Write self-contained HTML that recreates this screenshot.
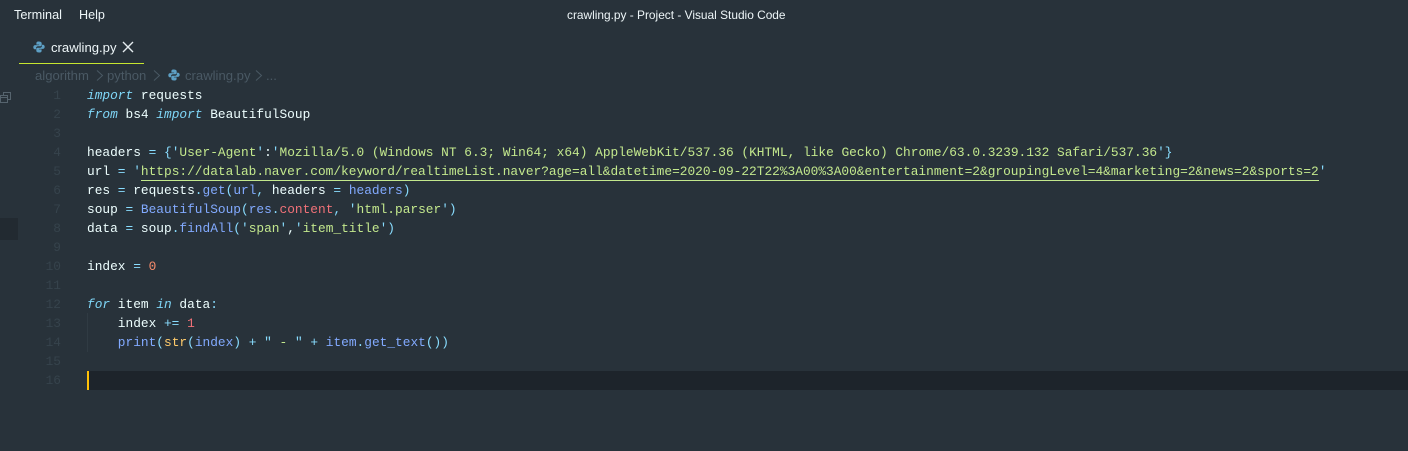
<!DOCTYPE html>
<html><head><meta charset="utf-8">
<style>
html,body{margin:0;padding:0;width:1408px;height:451px;overflow:hidden;background:#28323a}
.u{position:absolute;font-family:"Liberation Sans",sans-serif;font-size:12.6px;line-height:18px;white-space:nowrap;color:#eef6f8}
.bc{color:#4a5964}
.l{position:absolute;left:87px;height:19px;line-height:19px;font-family:"Liberation Mono",monospace;font-size:12.83px;white-space:pre;color:#eeffff}
.n{position:absolute;width:61px;left:0;text-align:right;height:19px;line-height:19px;font-family:"Liberation Mono",monospace;font-size:12.83px;color:#36434c}
i{color:#7fd6f7;font-style:italic}
.o{color:#89ddff}.f{color:#82aaff}.s{color:#c3e88d}.r{color:#f07178}.c{color:#f78c6c}.y{color:#ffcb6b}
</style></head><body>
<div class="u" style="left:14px;top:6px;font-size:12.7px">Terminal</div>
<div class="u" style="left:79px;top:6px">Help</div>
<div class="u" style="left:567px;top:6px;font-size:11.9px">crawling.py - Project - Visual Studio Code</div>

<svg style="position:absolute;left:33px;top:41px" width="12" height="12" viewBox="0 0 12 12"><path d="M5.8 0.5C3.5 0.5 3.4 1.6 3.4 2.4V3.6H6.1V4.1H2.2C1 4.1 0.3 5 0.3 6.2C0.3 7.5 1 8.3 2 8.3H3.1V7C3.1 5.9 4 5.2 5 5.2H7.4C8.2 5.2 8.7 4.6 8.7 3.9V2.3C8.7 1.2 7.6 0.5 5.8 0.5Z" fill="#5d9fc4"/><path d="M6.2 11.5C8.5 11.5 8.6 10.4 8.6 9.6V8.4H5.9V7.9H9.8C11 7.9 11.7 7 11.7 5.8C11.7 4.5 11 3.7 10 3.7H8.9V5C8.9 6.1 8 6.8 7 6.8H4.6C3.8 6.8 3.3 7.4 3.3 8.1V9.7C3.3 10.8 4.4 11.5 6.2 11.5Z" fill="#5d9fc4"/></svg>
<div class="u" style="left:51px;top:38px;font-size:13.1px;line-height:19px">crawling.py</div>
<svg style="position:absolute;left:122px;top:41px" width="12" height="12" viewBox="0 0 12 12"><path d="M1 1L11 11M11 1L1 11" stroke="#e4ecef" stroke-width="1.4" fill="none"/></svg>
<div style="position:absolute;left:19px;top:63px;width:125px;height:1px;background:#c6e62f"></div>

<div class="u bc" style="left:35px;top:66px;font-size:13.1px;line-height:19px">algorithm</div>
<svg style="position:absolute;left:96px;top:70px" width="8" height="11" viewBox="0 0 8 11"><path d="M1 0.5L6.5 5.5L1 10.5" stroke="#4a5964" fill="none"/></svg>
<div class="u bc" style="left:107px;top:66px;font-size:13.1px;line-height:19px">python</div>
<svg style="position:absolute;left:153px;top:70px" width="8" height="11" viewBox="0 0 8 11"><path d="M1 0.5L6.5 5.5L1 10.5" stroke="#4a5964" fill="none"/></svg>
<svg style="position:absolute;left:168px;top:69px" width="12" height="12" viewBox="0 0 12 12"><path d="M5.8 0.5C3.5 0.5 3.4 1.6 3.4 2.4V3.6H6.1V4.1H2.2C1 4.1 0.3 5 0.3 6.2C0.3 7.5 1 8.3 2 8.3H3.1V7C3.1 5.9 4 5.2 5 5.2H7.4C8.2 5.2 8.7 4.6 8.7 3.9V2.3C8.7 1.2 7.6 0.5 5.8 0.5Z" fill="#5d9fc4"/><path d="M6.2 11.5C8.5 11.5 8.6 10.4 8.6 9.6V8.4H5.9V7.9H9.8C11 7.9 11.7 7 11.7 5.8C11.7 4.5 11 3.7 10 3.7H8.9V5C8.9 6.1 8 6.8 7 6.8H4.6C3.8 6.8 3.3 7.4 3.3 8.1V9.7C3.3 10.8 4.4 11.5 6.2 11.5Z" fill="#5d9fc4"/></svg>
<div class="u bc" style="left:185px;top:66px;font-size:13.1px;line-height:19px">crawling.py</div>
<svg style="position:absolute;left:255px;top:70px" width="8" height="11" viewBox="0 0 8 11"><path d="M1 0.5L6.5 5.5L1 10.5" stroke="#4a5964" fill="none"/></svg>
<div class="u bc" style="left:266px;top:66px;font-size:13.1px;line-height:19px">...</div>

<svg style="position:absolute;left:0;top:92px" width="11" height="12" viewBox="0 0 11 12"><path d="M3.5 3V0.5H10.5V7.5H7.5M0.5 3.5H7.5V10.5H0.5ZM0.5 5.5H7.5" stroke="#56646e" fill="none"/></svg>
<div style="position:absolute;left:0;top:218px;width:18px;height:22px;background:#222a31"></div>
<div style="position:absolute;left:87px;top:371px;width:1321px;height:19px;background:#1d242b"></div>
<div style="position:absolute;left:87px;top:371px;width:2px;height:19px;background:#ffc107"></div>
<div style="position:absolute;left:87px;top:313px;width:1px;height:39px;background:#303b43"></div>
<div style="position:absolute;left:141px;top:180px;width:1178px;height:1px;background:#c3e88d"></div>

<div class="n" style="top:86px">1</div><div class="n" style="top:105px">2</div><div class="n" style="top:124px">3</div><div class="n" style="top:143px">4</div>
<div class="n" style="top:162px">5</div><div class="n" style="top:181px">6</div><div class="n" style="top:200px">7</div><div class="n" style="top:219px">8</div>
<div class="n" style="top:238px">9</div><div class="n" style="top:257px">10</div><div class="n" style="top:276px">11</div><div class="n" style="top:295px">12</div>
<div class="n" style="top:314px">13</div><div class="n" style="top:333px">14</div><div class="n" style="top:352px">15</div><div class="n" style="top:371px">16</div>

<div class="l" style="top:86px"><i>import</i> requests</div>
<div class="l" style="top:105px"><i>from</i> bs4 <i>import</i> BeautifulSoup</div>
<div class="l" style="top:143px">headers <span class="o">=</span> <span class="o">{'</span><span class="s">User-Agent</span><span class="o">'</span>:<span class="o">'</span><span class="s">Mozilla/5.0 (Windows NT 6.3; Win64; x64) AppleWebKit/537.36 (KHTML, like Gecko) Chrome/63.0.3239.132 Safari/537.36</span><span class="o">'}</span></div>
<div class="l" style="top:162px">url <span class="o">=</span> <span class="o">'</span><span class="s">https://datalab.naver.com/keyword/realtimeList.naver?age=all&amp;datetime=2020-09-22T22%3A00%3A00&amp;entertainment=2&amp;groupingLevel=4&amp;marketing=2&amp;news=2&amp;sports=2</span><span class="o">'</span></div>
<div class="l" style="top:181px">res <span class="o">=</span> requests<span class="o">.</span><span class="f">get</span><span class="o">(</span><span class="f">url</span><span class="o">,</span> headers <span class="o">=</span> <span class="f">headers</span><span class="o">)</span></div>
<div class="l" style="top:200px">soup <span class="o">=</span> <span class="f">BeautifulSoup</span><span class="o">(</span><span class="f">res</span><span class="o">.</span><span class="r">content</span><span class="o">,</span> <span class="o">'</span><span class="s">html.parser</span><span class="o">')</span></div>
<div class="l" style="top:219px">data <span class="o">=</span> soup<span class="o">.</span><span class="f">findAll</span><span class="o">('</span><span class="s">span</span><span class="o">'</span>,<span class="o">'</span><span class="s">item_title</span><span class="o">')</span></div>
<div class="l" style="top:257px">index <span class="o">=</span> <span class="c">0</span></div>
<div class="l" style="top:295px"><i>for</i> item <i>in</i> data<span class="o">:</span></div>
<div class="l" style="top:314px">    index <span class="o">+=</span> <span class="r">1</span></div>
<div class="l" style="top:333px">    <span class="f">print</span><span class="o">(</span><span class="y">str</span><span class="o">(</span><span class="f">index</span><span class="o">)</span> <span class="o">+</span> <span class="o">"</span> <span class="s">-</span> <span class="o">"</span> <span class="o">+</span> <span class="f">item</span><span class="o">.</span><span class="f">get_text</span><span class="o">())</span></div>
</body></html>
